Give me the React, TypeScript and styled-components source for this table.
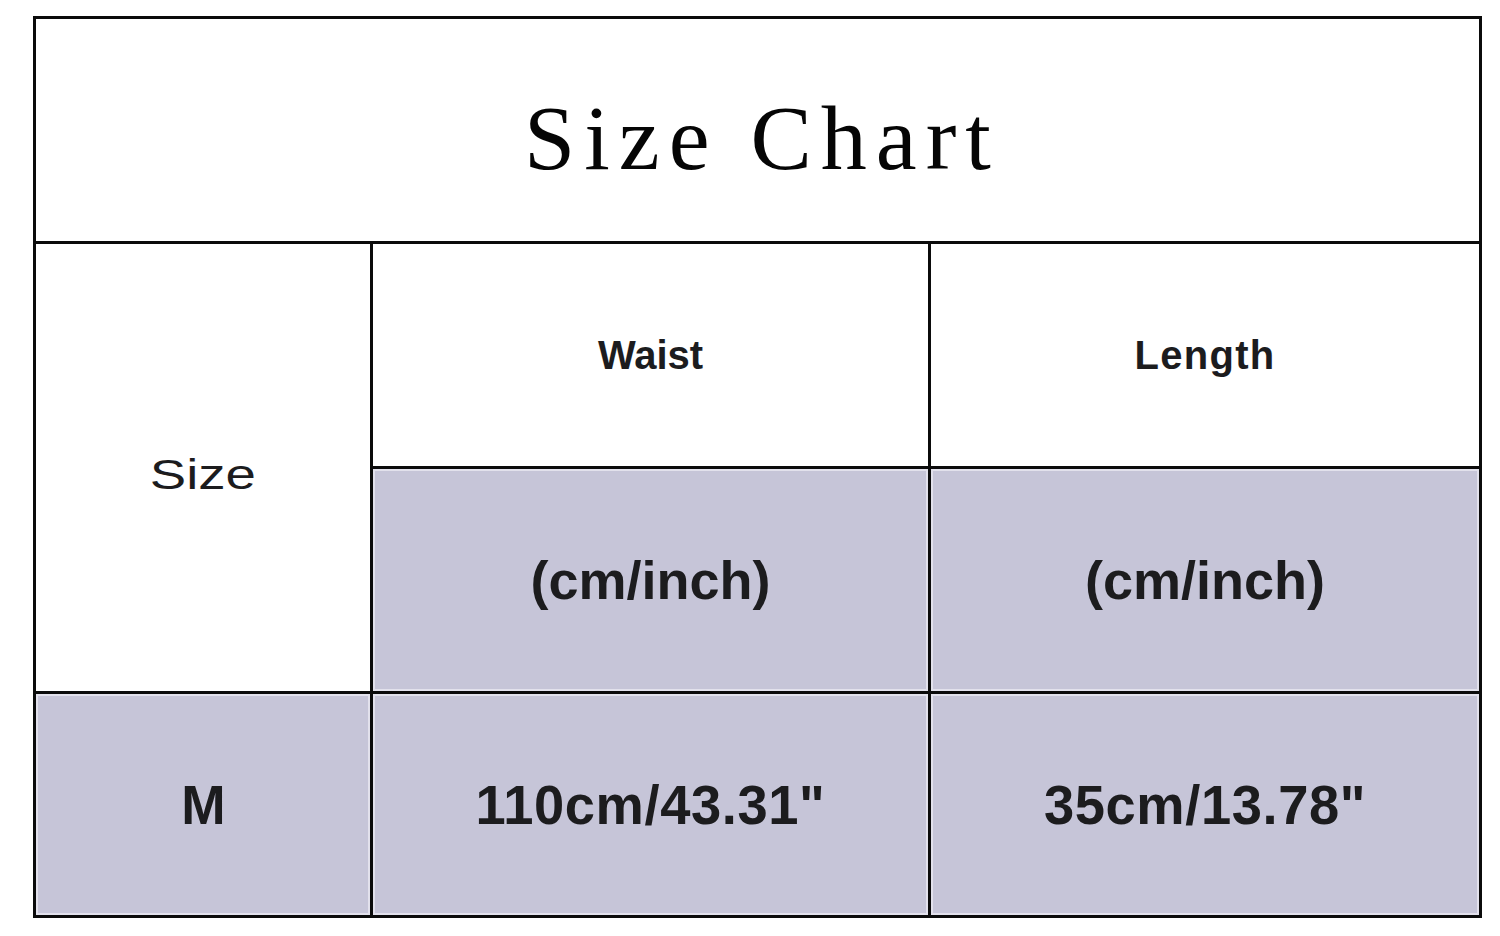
import { Fragment } from 'react';
import styled, { createGlobalStyle } from 'styled-components';

const GlobalStyle = createGlobalStyle`
  html, body {
    margin: 0;
    padding: 0;
    background: #ffffff;
  }
  body {
    font-family: 'Liberation Sans', Arial, sans-serif;
  }
`;

const Page = styled.div`
  width: 1500px;
  height: 936px;
  box-sizing: border-box;
  padding: 16px 18px 18px 33px;
  background: #ffffff;
`;

const Table = styled.div`
  width: 1449px;
  height: 902px;
  box-sizing: border-box;
  display: grid;
  grid-template-columns: 334px 555px 548px;
  grid-template-rows: 222px 222px 222px 221px;
  gap: 3px;
  padding: 3px;
  background: #0b0b0b;
`;

const Cell = styled.div<{ $shaded?: boolean; $span?: number; $rows?: number }>`
  display: flex;
  align-items: center;
  justify-content: center;
  background: ${(p) => (p.$shaded ? '#c6c5d8' : '#ffffff')};
  box-shadow: ${(p) => (p.$shaded ? 'inset 0 0 0 2px #e2e1ec' : 'none')};
  grid-column: ${(p) => (p.$span ? `span ${p.$span}` : 'auto')};
  grid-row: ${(p) => (p.$rows ? `span ${p.$rows}` : 'auto')};
  color: #1c1c1e;
`;

const Title = styled.h1`
  margin: 0;
  padding: 16px 0 0 9px;
  font-family: 'Liberation Serif', 'Times New Roman', serif;
  font-weight: normal;
  font-size: 92px;
  letter-spacing: 9px;
  color: #050505;
`;

const Label = styled.span<{
  $size: number;
  $bold?: boolean;
  $stretch?: number;
  $tracking?: number;
}>`
  display: inline-block;
  font-family: 'Liberation Sans', Arial, sans-serif;
  font-size: ${(p) => p.$size}px;
  font-weight: ${(p) => (p.$bold ? 700 : 400)};
  letter-spacing: ${(p) => p.$tracking ?? 0}px;
  line-height: 1;
  transform: scaleX(${(p) => p.$stretch ?? 1});
`;

const rows = [{ size: 'M', waist: '110cm/43.31"', length: '35cm/13.78"' }];

export default function App() {
  return (
    <>
      <GlobalStyle />
      <Page>
        <Table>
          <Cell $span={3}>
            <Title>Size Chart</Title>
          </Cell>

          <Cell $rows={2}>
            <Label $size={42} $stretch={1.3} style={{ marginTop: 14 }}>
              Size
            </Label>
          </Cell>
          <Cell>
            <Label $size={40} $bold>
              Waist
            </Label>
          </Cell>
          <Cell>
            <Label $size={40} $bold $tracking={1.3}>
              Length
            </Label>
          </Cell>

          <Cell $shaded>
            <Label $size={54} $bold>
              (cm/inch)
            </Label>
          </Cell>
          <Cell $shaded>
            <Label $size={54} $bold>
              (cm/inch)
            </Label>
          </Cell>

          {rows.map((r) => (
            <Fragment key={r.size}>
              <Cell $shaded>
                <Label $size={56} $bold $stretch={0.95}>
                  {r.size}
                </Label>
              </Cell>
              <Cell $shaded>
                <Label $size={56} $bold $stretch={0.97} $tracking={0.6}>
                  {r.waist}
                </Label>
              </Cell>
              <Cell $shaded>
                <Label $size={56} $bold $stretch={0.97} $tracking={0.6}>
                  {r.length}
                </Label>
              </Cell>
            </Fragment>
          ))}
        </Table>
      </Page>
    </>
  );
}
